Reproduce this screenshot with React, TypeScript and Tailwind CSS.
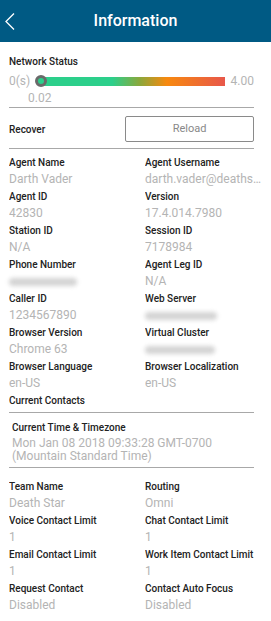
import React from "react";

const Label = ({ children }: { children: React.ReactNode }) => (
  <div className="h-[17px] leading-[17px] text-[10px] font-medium text-[#222] truncate">{children}</div>
);
const Value = ({ children }: { children: React.ReactNode }) => (
  <div className="h-[17px] leading-[17px] text-[12px] text-[#b4b4b4] truncate min-w-0">{children}</div>
);
const Blur = ({ w }: { w: string }) => (
  <div className="h-[17px] flex items-center">
    <div className={`h-[8px] ${w} bg-[#d4d4d4] blur-[2px] rounded-sm`} />
  </div>
);

type Cell = [string, React.ReactNode];

const Pairs = ({ rows }: { rows: [Cell, Cell | null][] }) => (
  <div className="grid grid-cols-[136px_minmax(0,1fr)] mr-[-8px]">
    {rows.map(([l, r], i) => (
      <React.Fragment key={i}>
        <div className="min-w-0">
          <Label>{l[0]}</Label>
          {typeof l[1] === "string" ? <Value>{l[1]}</Value> : l[1]}
        </div>
        <div className="min-w-0">
          {r && (
            <>
              <Label>{r[0]}</Label>
              {typeof r[1] === "string" ? <Value>{r[1]}</Value> : r[1]}
            </>
          )}
        </div>
      </React.Fragment>
    ))}
  </div>
);

export default function App() {
  return (
    <div className="w-[271px] h-[621px] bg-white overflow-hidden" style={{ fontFamily: "Roboto, 'Liberation Sans', sans-serif" }}>
      <div className="h-[42px] bg-[#005a84] relative flex items-center justify-center">
        <svg className="absolute left-[4px] top-[12px]" width="12" height="19" viewBox="0 0 12 19">
          <polyline points="10,1.5 2,9.5 10,17.5" fill="none" stroke="#fff" strokeWidth="1.3" />
        </svg>
        <span className="text-white text-[16px] font-medium">Information</span>
      </div>
      <div className="px-[9px] pr-[17px]">
        <div className="mt-[11px] h-[17px] flex items-center text-[10px] font-medium text-[#222]">Network Status</div>
        <div className="mt-[4px] h-[14px] flex items-center">
          <span className="text-[12px] text-[#b4b4b4] w-[27px]">0(s)</span>
          <div className="relative w-[195px] h-[14px] flex items-center">
            <div
              className="ml-[8px] flex-1 h-[9px]"
              style={{ background: "linear-gradient(90deg, #2ccf8b 0%, #2ccf8b 38%, #8aa83c 53%, #f7890f 68%, #e8574a 100%)" }}
            />
            <div className="absolute left-0 top-[1px] w-[12px] h-[12px] rounded-full border-[3px] border-[#6a6a6a] bg-[#2ccf8b]" />
          </div>
          <span className="ml-[6px] text-[12px] text-[#b4b4b4]">4.00</span>
        </div>
        <div className="mt-[3px] h-[14px] flex items-center pl-[19px] text-[12px] text-[#b4b4b4]">0.02</div>
        <div className="mt-[2px] border-t border-[#a8a8a8]" />
        <div className="pt-[8px] pb-[6px] flex items-center">
          <span className="text-[10px] font-medium text-[#222] w-[116px]">Recover</span>
          <button className="w-[129px] h-[26px] border border-[#8a8a8a] rounded-[2px] text-[11px] text-[#888]">Reload</button>
        </div>
        <div className="border-t border-[#a8a8a8]" />
        <div className="pt-[5px]">
          <Pairs
            rows={[
              [["Agent Name", "Darth Vader"], ["Agent Username", "darth.vader@deathstar.com"]],
              [["Agent ID", "42830"], ["Version", "17.4.014.7980"]],
              [["Station ID", "N/A"], ["Session ID", "7178984"]],
              [["Phone Number", <Blur w="w-[68px]" />], ["Agent Leg ID", "N/A"]],
              [["Caller ID", "1234567890"], ["Web Server", <Blur w="w-[72px]" />]],
              [["Browser Version", "Chrome 63"], ["Virtual Cluster", <Blur w="w-[70px]" />]],
              [["Browser Language", "en-US"], ["Browser Localization", "en-US"]],
            ]}
          />
          <Label>Current Contacts</Label>
        </div>
        <div className="mt-[3px] border-t border-[#a8a8a8]" />
        <div className="pt-[6px] pb-[4px] px-[3px]">
          <Label>Current Time &amp; Timezone</Label>
          <div className="mt-[1px] text-[12px] leading-[13px] text-[#b4b4b4]">
            Mon Jan 08 2018 09:33:28 GMT-0700
            <br />
            (Mountain Standard Time)
          </div>
        </div>
        <div className="border-t border-[#a8a8a8]" />
        <div className="pt-[10px]">
          <Pairs
            rows={[
              [["Team Name", "Death Star"], ["Routing", "Omni"]],
              [["Voice Contact Limit", "1"], ["Chat Contact Limit", "1"]],
              [["Email Contact Limit", "1"], ["Work Item Contact Limit", "1"]],
              [["Request Contact", "Disabled"], ["Contact Auto Focus", "Disabled"]],
            ]}
          />
        </div>
      </div>
    </div>
  );
}
